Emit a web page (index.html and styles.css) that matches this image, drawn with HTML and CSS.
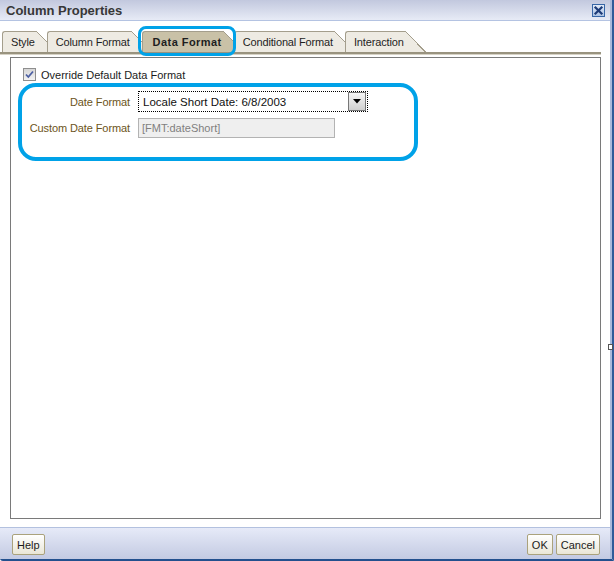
FILE: index.html
```html
<!DOCTYPE html>
<html>
<head>
<meta charset="utf-8">
<title>Column Properties</title>
<link rel="stylesheet" href="styles.css">
</head>
<body>
<div class="frame">
  <div class="dialog">
    <div class="titlebar">
      <span class="title">Column Properties</span>
      <span class="close" title="Close">
        <svg width="13" height="13" viewBox="0 0 13 13">
          <defs>
            <linearGradient id="cg" x1="0" y1="0" x2="0" y2="1">
              <stop offset="0" stop-color="#e4ecf8"/>
              <stop offset="1" stop-color="#a9c0e2"/>
            </linearGradient>
          </defs>
          <rect x="0.5" y="0.5" width="12" height="12" fill="url(#cg)" stroke="#3766a6"/>
          <path d="M3.5 3.5 L9.5 9.5 M9.5 3.5 L3.5 9.5" stroke="#1d3b78" stroke-width="2.2" stroke-linecap="square"/>
        </svg>
      </span>
    </div>

    <div class="tabs">
      <div class="tab">Style</div>
      <div class="tab">Column Format</div>
      <div class="tab tab-active">Data Format</div>
      <div class="tab">Conditional Format</div>
      <div class="tab">Interaction</div>
    </div>

    <div class="panel">
      <label class="check-row">
        <span class="checkbox">
          <svg width="9" height="9" viewBox="0 0 9 9"><path d="M1 4.5 L3.3 7 L8 1.5" fill="none" stroke="#4c5fa3" stroke-width="1.8"/></svg>
        </span>
        <span>Override Default Data Format</span>
      </label>

      <div class="form">
        <span class="label">Date Format</span>
        <div class="select">
          <span class="select-text">Locale Short Date: 6/8/2003</span>
          <span class="select-btn">
            <svg width="8" height="5" viewBox="0 0 8 5"><path d="M0 0 H8 L4 4.5 Z" fill="#000"/></svg>
          </span>
        </div>
        <span class="label">Custom Date Format</span>
        <div class="input">[FMT:dateShort]</div>
      </div>
    </div>

    <div class="footer">
      <button class="btn">Help</button>
      <span class="spacer"></span>
      <button class="btn">OK</button>
      <button class="btn">Cancel</button>
    </div>

    <span class="mark mark-tab"></span>
    <span class="mark mark-form"></span>
    <span class="notch"></span>
  </div>
</div>
</body>
</html>
```

FILE: styles.css
```css
html, body {
  margin: 0;
  padding: 0;
  background: #ffffff;
}

.frame {
  width: 614px;
  height: 561px;
  box-sizing: border-box;
  border-right: 2px solid #2d5b99;
  border-bottom: 2px solid #23508e;
  border-bottom-left-radius: 3px;
}

.dialog {
  position: relative;
  height: 100%;
  box-sizing: border-box;
  border-right: 2px solid #a9badb;
  display: flex;
  flex-direction: column;
  font-family: "Liberation Sans", Arial, sans-serif;
  font-size: 11px;
  color: #1b1b1b;
  background: #ffffff;
}

.titlebar {
  height: 20px;
  border-bottom: 1px solid #b4c3e2;
  background: linear-gradient(#c2c8de, #e7ebf6);
  display: flex;
  align-items: center;
  padding: 0 5px 0 6px;
}

.title {
  font-size: 13px;
  font-weight: bold;
  color: #373737;
  flex: 1;
}

.close {
  display: flex;
  width: 13px;
  height: 13px;
}

.tabs {
  display: flex;
  margin-top: 10px;
  padding-left: 2px;
  width: 599px;
  border-bottom: 2px solid #99937f;
  box-shadow: 0 1px 0 #d6d2c5;
}

.tab {
  position: relative;
  height: 20px;
  line-height: 20px;
  padding: 0 2px 0 8px;
  border: 1px solid #a49e8c;
  border-right: 0;
  border-bottom: 0;
  border-top-left-radius: 3px;
  background: #eeebe3;
  margin-right: 10px;
  color: #1e1e1e;
  white-space: nowrap;
  letter-spacing: -0.15px;
}

.tab::after {
  content: "";
  position: absolute;
  top: -1px;
  right: -20px;
  width: 20px;
  height: 21px;
  background: linear-gradient(to top right, #eeebe3 calc(50% - 1px), #a49e8c calc(50% - 1px), #a49e8c 50%, transparent 50%);
}

.tab-active {
  background: #c9c1a7;
  font-weight: bold;
  letter-spacing: 0.45px;
  padding-left: 10px;
}

.tab-active::after {
  background: linear-gradient(to top right, #c9c1a7 calc(50% - 1px), #a49e8c calc(50% - 1px), #a49e8c 50%, transparent 50%);
}

.panel {
  flex: 1;
  margin: 3px 9px 8px 10px;
  border: 1px solid #7a7a7a;
  padding: 10px 0 0 12px;
}

.check-row {
  display: flex;
  align-items: center;
  gap: 5px;
  height: 13px;
}

.checkbox {
  width: 11px;
  height: 11px;
  border: 1px solid #8e8e8e;
  background: linear-gradient(#d6d6d6, #f2f2f2);
  display: flex;
  align-items: center;
  justify-content: center;
}

.form {
  display: grid;
  grid-template-columns: 107px auto;
  column-gap: 8px;
  row-gap: 6px;
  align-items: center;
  justify-items: start;
  margin-top: 10px;
  margin-left: -12px;
  padding-left: 12px;
}

.label {
  justify-self: end;
  color: #6c5420;
  letter-spacing: -0.1px;
}

.select {
  width: 228px;
  height: 19px;
  border: 1px dotted #000;
  display: flex;
  align-items: center;
  justify-content: space-between;
  background: #fff;
  box-sizing: content-box;
}

.select-text {
  padding-left: 4px;
  font-size: 11.5px;
  color: #111;
}

.select-btn {
  width: 16px;
  height: 17px;
  margin-right: 1px;
  border: 1px solid #777;
  background: linear-gradient(#f7f7f7, #d0d0d0);
  display: flex;
  align-items: center;
  justify-content: center;
}

.input {
  width: 192px;
  height: 18px;
  line-height: 18px;
  border: 1px solid #b3b3b3;
  background: #efefef;
  color: #7f7f7f;
  padding-left: 3px;
}

.footer {
  border-top: 1px solid #b3c1df;
  background: linear-gradient(#e6eaf8, #c3cae2);
  display: flex;
  align-items: flex-start;
  padding: 6px 10px 0 12px;
  gap: 3px;
  box-sizing: border-box;
  height: 32px;
}

.spacer {
  flex: 1;
}

.btn {
  height: 21px;
  padding: 0 4px;
  border: 1px solid #aaa27c;
  border-radius: 2px;
  background: linear-gradient(#ffffff, #e9e6d6);
  font-family: "Liberation Sans", Arial, sans-serif;
  font-size: 11px;
  color: #1b1b1b;
}

.mark {
  position: absolute;
  border: 3.5px solid #00a2e8;
  box-sizing: border-box;
}

.mark-tab {
  left: 138px;
  top: 26px;
  width: 98px;
  height: 30px;
  border-radius: 8px;
}

.mark-form {
  left: 18px;
  top: 83px;
  width: 400px;
  height: 78px;
  border-width: 4px;
  border-radius: 18px;
}

.notch {
  position: absolute;
  right: -3px;
  top: 344px;
  width: 3px;
  height: 4px;
  border: 1px solid #555;
  background: #fff;
}
```
